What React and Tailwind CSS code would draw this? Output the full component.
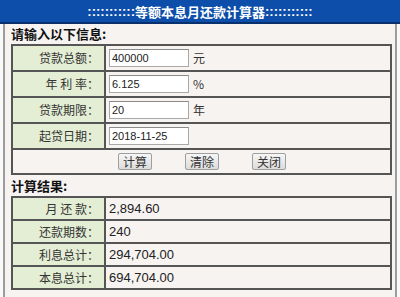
import React from "react";

const font = { fontFamily: '"Noto Sans CJK SC", "Liberation Sans", sans-serif' };

const inputRows = [
  { label: "贷款总额：", value: "400000", unit: "元" },
  { label: "年 利 率：", value: "6.125", unit: "%" },
  { label: "贷款期限：", value: "20", unit: "年" },
  { label: "起贷日期：", value: "2018-11-25", unit: "" },
];

const resultRows = [
  { label: "月 还 款：", value: "2,894.60" },
  { label: "还款期数：", value: "240" },
  { label: "利息总计：", value: "294,704.00" },
  { label: "本息总计：", value: "694,704.00" },
];

function Btn({ children }) {
  return (
    <button className="w-[34px] h-[17px] border border-[#9f9f9f] rounded-[2px] bg-gradient-to-b from-[#f6f6f6] to-[#dcdcdc] text-[12px] leading-none text-[#333]">
      {children}
    </button>
  );
}

export default function App() {
  return (
    <div className="w-[400px] h-[297px] bg-[#fafafa] overflow-hidden" style={font}>
      {/* title bar */}
      <div className="h-[24px] bg-[#0c4ea9] border-b-2 border-[#07306d] flex items-center justify-center text-white font-bold text-[13px] leading-none">
        <span className="font-['Liberation_Sans']">:::::::::::</span>
        <span>等额本息月还款计算器</span>
        <span className="font-['Liberation_Sans']">:::::::::::</span>
      </div>

      <div className="mx-[3px] h-[273px] border-x-2 border-[#9c9c9c] bg-[#f7f3f1] pl-[6px] pr-[3px]">
        <div className="h-[20px] flex items-center font-bold text-[13px] text-[#111]">请输入以下信息:</div>

        <table className="w-full border-collapse border-2 border-[#555]">
          <tbody>
            {inputRows.map((r) => (
              <tr key={r.label} className="h-[26px]">
                <td className="w-[93px] border-2 border-[#555] bg-[#e4eed5] text-right pr-[5px] text-[12px] text-[#333] whitespace-pre">
                  {r.label}
                </td>
                <td className="border-2 border-[#555] pl-[3px]">
                  <div className="flex items-center gap-[4px]">
                    <div className="w-[80px] h-[18px] bg-white border border-[#a9a9a9] border-t-[#8a8a8a] flex items-center pl-[2px] text-[11px] text-[#222] font-['Liberation_Sans']">
                      {r.value}
                    </div>
                    <span className="text-[12px] text-[#333]">{r.unit}</span>
                  </div>
                </td>
              </tr>
            ))}
            <tr className="h-[25px]">
              <td colSpan={2} className="border-2 border-[#555]">
                <div className="flex justify-center gap-[33px] pl-[1px]">
                  <Btn>计算</Btn>
                  <Btn>清除</Btn>
                  <Btn>关闭</Btn>
                </div>
              </td>
            </tr>
          </tbody>
        </table>

        <div className="h-[21px] flex items-center font-bold text-[13px] text-[#111]">计算结果:</div>

        <table className="w-full border-collapse border-2 border-[#555]">
          <tbody>
            {resultRows.map((r) => (
              <tr key={r.label} className="h-[23px]">
                <td className="w-[93px] border-2 border-[#555] bg-[#e4eed5] text-right pr-[5px] text-[12px] text-[#333] whitespace-pre">
                  {r.label}
                </td>
                <td className="border-2 border-[#555] pl-[3px] text-[13px] text-[#222] font-['Liberation_Sans']">
                  {r.value}
                </td>
              </tr>
            ))}
          </tbody>
        </table>
      </div>
    </div>
  );
}
